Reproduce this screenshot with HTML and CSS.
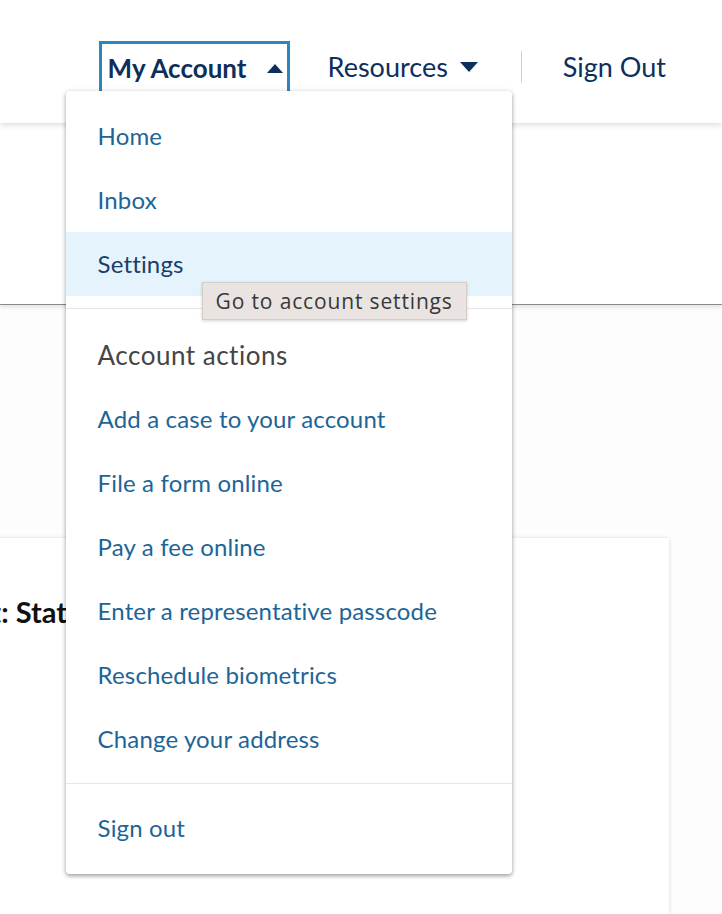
FILE: index.html
```html
<!DOCTYPE html>
<html lang="en">
<head>
<meta charset="utf-8">
<title>My Account</title>
<link rel="stylesheet" href="styles.css">
</head>
<body>
<header class="site-header">
  <nav class="nav">
    <div class="nav-account">
      <button class="account-btn" type="button">
        <span>My Account</span>
        <svg class="caret-up" width="16" height="9" viewBox="0 0 16 9"><path d="M0 9 L8 0 L16 9 Z" fill="#0d2f5c"/></svg>
      </button>
      <div class="dropdown">
        <ul class="menu-group">
          <li><a href="#">Home</a></li>
          <li><a href="#">Inbox</a></li>
          <li class="active"><a href="#">Settings</a></li>
        </ul>
        <hr class="menu-sep">
        <div class="menu-heading">Account actions</div>
        <ul class="menu-group">
          <li><a href="#">Add a case to your account</a></li>
          <li><a href="#">File a form online</a></li>
          <li><a href="#">Pay a fee online</a></li>
          <li><a href="#">Enter a representative passcode</a></li>
          <li><a href="#">Reschedule biometrics</a></li>
          <li><a href="#">Change your address</a></li>
        </ul>
        <hr class="menu-sep menu-sep-last">
        <ul class="menu-group">
          <li><a href="#">Sign out</a></li>
        </ul>
        <div class="tooltip">Go to account settings</div>
      </div>
    </div>
    <a class="nav-link" href="#">Resources
      <svg class="caret-down" width="18" height="10" viewBox="0 0 18 10"><path d="M0 0 L18 0 L9 10 Z" fill="#0d2f5c"/></svg>
    </a>
    <span class="nav-divider"></span>
    <a class="nav-link" href="#">Sign Out</a>
  </nav>
</header>
<section class="band"></section>
<main class="main">
  <div class="card">
    <h2 class="card-title">Account: Status</h2>
  </div>
</main>
</body>
</html>
```
FILE: styles.css
```css
html, body {
  margin: 0;
  padding: 0;
}
body {
  font-family: Lato, "Open Sans", sans-serif;
  background: #fdfdfd;
  overflow: hidden;
  height: 914px;
}
.site-header {
  height: 123px;
  background: #fff;
  box-shadow: 0 2px 6px rgba(0,0,0,0.14);
  position: relative;
  z-index: 3;
}
.nav {
  display: flex;
  align-items: center;
  justify-content: flex-end;
  padding: 41px 56px 0 0;
  height: 50px;
}
.nav-account {
  position: relative;
  height: 50px;
}
.account-btn {
  display: flex;
  align-items: center;
  justify-content: space-between;
  white-space: nowrap;
  height: 50px;
  width: 191px;
  box-sizing: border-box;
  border: 3px solid #2b87bd;
  border-bottom: none;
  background: #fff;
  padding: 1px 4px 0 6px;
  font-family: inherit;
  font-size: 26px;
  letter-spacing: 0;
  font-weight: 700;
  color: #0d2f5c;
  cursor: pointer;
}
.nav-link {
  display: flex;
  align-items: center;
  gap: 12px;
  margin-left: 38px;
  font-size: 27px;
  color: #0d2f5c;
  text-decoration: none;
  padding-top: 1px;
  white-space: nowrap;
}
.nav-divider {
  width: 1px;
  height: 32px;
  background: #d0d0d0;
  margin: 2px 41px 0 43px;
}
.nav-divider + .nav-link {
  margin-left: 0;
}
.dropdown {
  position: absolute;
  top: 50px;
  left: -33px;
  width: 446px;
  background: #fff;
  border-radius: 4px;
  box-shadow: 0 2px 4px rgba(0,0,0,0.35), 0 0 6px rgba(0,0,0,0.08);
  padding: 13px 0 14px;
  z-index: 5;
}
.menu-group {
  list-style: none;
  margin: 0;
  padding: 0;
}
.menu-group li {
  height: 64px;
  box-sizing: border-box;
  padding-bottom: 2px;
  display: flex;
  align-items: center;
  padding-left: 32px;
}
.menu-group li.active {
  background: #e5f3fc;
}
.menu-group a {
  font-size: 24px;
  letter-spacing: 0.15px;
  color: #1d6597;
  text-decoration: none;
  white-space: nowrap;
}
.menu-group li.active a {
  color: #173f6b;
}
.menu-sep {
  border: none;
  border-top: 1px solid #e6e6e6;
  margin: 12px 0 14px;
}
.menu-sep-last {
  margin-bottom: 12px;
}
.menu-heading {
  height: 64px;
  display: flex;
  align-items: center;
  padding-left: 32px;
  font-size: 26px;
  letter-spacing: 0.5px;
  color: #454545;
}
.tooltip {
  position: absolute;
  left: 136px;
  top: 191px;
  height: 38px;
  box-sizing: border-box;
  padding: 0 13px;
  display: flex;
  align-items: center;
  background: #e9e4e1;
  border: 1px solid #d4cecb;
  box-shadow: 0 1px 3px rgba(0,0,0,0.18);
  font-family: "Open Sans", "Liberation Sans", Arial, sans-serif;
  font-size: 21px;
  letter-spacing: 0.85px;
  color: #383838;
  white-space: nowrap;
}
.band {
  height: 181px;
  background: #fff;
  border-bottom: 1px solid #8a8a8a;
  box-shadow: 0 2px 5px rgba(0,0,0,0.12);
  position: relative;
  z-index: 2;
}
.main {
  padding-top: 233px;
}
.card {
  margin-left: -200px;
  width: 869px;
  height: 500px;
  background: #fff;
  box-shadow: 0 0 4px rgba(0,0,0,0.14);
  padding-top: 56px;
  box-sizing: border-box;
}
.card-title {
  margin: 0 0 0 94px;
  font-size: 29px;
  font-weight: 700;
  color: #111;
  white-space: nowrap;
}
```
